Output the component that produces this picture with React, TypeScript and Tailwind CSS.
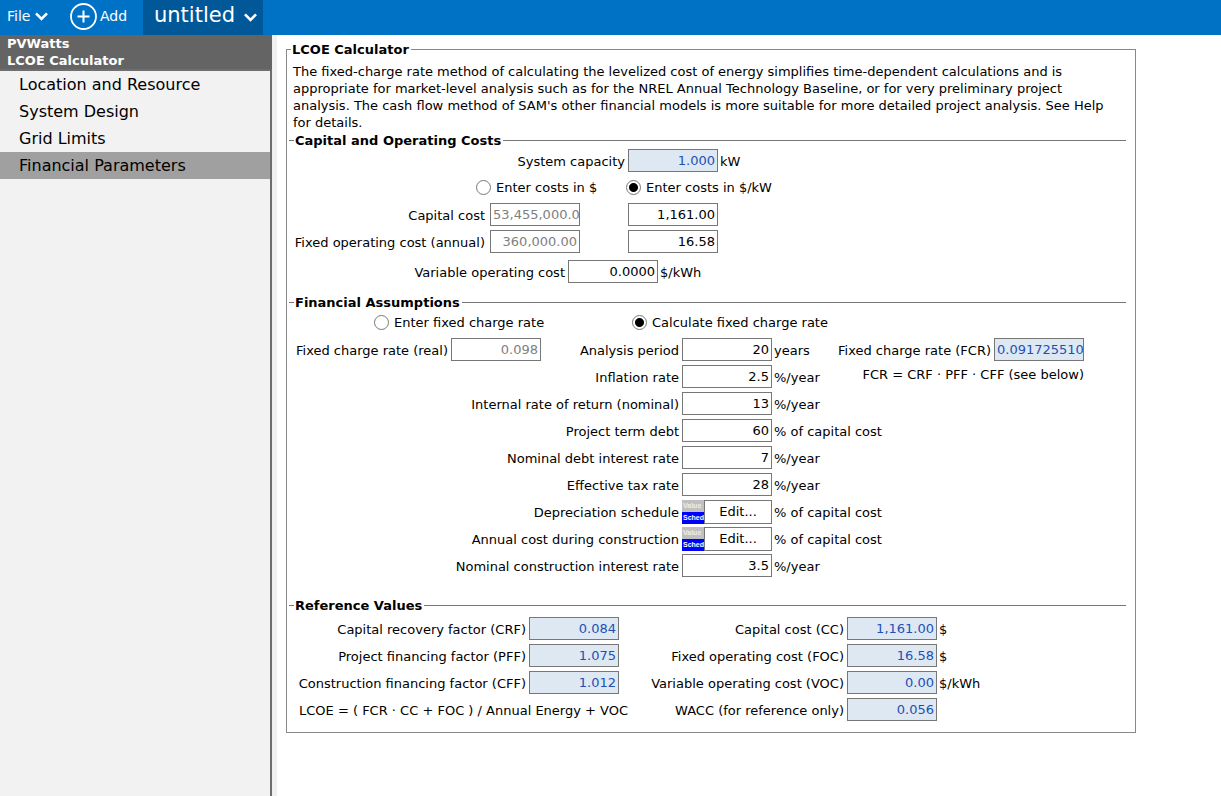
import { useState, type ReactNode } from "react";

const navItems = ["Location and Resource", "System Design", "Grid Limits", "Financial Parameters"];

function Chevron() {
  return (
    <svg className="h-[9px] w-[13px]" viewBox="0 0 13 9" fill="none" stroke="currentColor" strokeWidth="2.6" aria-hidden="true">
      <path d="M1 1.4 L6.5 7 L12 1.4" />
    </svg>
  );
}

function PlusCircle() {
  return (
    <svg className="h-[27px] w-[27px]" viewBox="0 0 27 27" fill="none" stroke="currentColor" aria-hidden="true">
      <circle cx="13.5" cy="13.5" r="12.5" strokeWidth="1.8" />
      <path d="M13.5 7.5 V19.5 M7.5 13.5 H19.5" strokeWidth="2" />
    </svg>
  );
}

type FieldKind = "edit" | "disabled" | "calc";

const fieldStyles: Record<FieldKind, string> = {
  edit: "bg-white text-black",
  disabled: "bg-white text-[#808080]",
  calc: "bg-[#dee8f3] text-[#1e50b4]",
};

function Field({ id, value, kind = "edit", long = false }: { id: string; value: string; kind?: FieldKind; long?: boolean }) {
  return (
    <input
      id={id}
      type="text"
      defaultValue={value}
      disabled={kind === "disabled"}
      readOnly={kind === "calc"}
      className={`h-[23px] w-[90px] shrink-0 border border-[#777777] pb-px pl-0.5 outline-none ${long ? "text-left" : "pr-0.5 text-right"} ${fieldStyles[kind]}`}
    />
  );
}

function Label({ id, className = "", children }: { id: string; className?: string; children: ReactNode }) {
  return (
    <label htmlFor={id} className={`shrink-0 pt-px pr-px text-right whitespace-nowrap ${className}`}>
      {children}
    </label>
  );
}

function Unit({ className = "", children }: { className?: string; children: ReactNode }) {
  return <span className={`pt-px whitespace-nowrap ${className}`}>{children}</span>;
}

interface RadioProps {
  name: string;
  checked: boolean;
  onSelect: () => void;
  className?: string;
  children: ReactNode;
}

function Radio({ name, checked, onSelect, className = "", children }: RadioProps) {
  return (
    <label className={`flex items-center gap-[5px] whitespace-nowrap ${className}`}>
      <input
        type="radio"
        name={name}
        checked={checked}
        onChange={onSelect}
        className="h-[15px] w-[15px] shrink-0 appearance-none rounded-full border border-[#777777] bg-white checked:bg-[radial-gradient(circle,#000_4px,transparent_5px)]"
      />
      {children}
    </label>
  );
}

function Schedule({ id }: { id: string }) {
  return (
    <div className="flex h-6 w-[90px]">
      <div className="flex w-[22px] flex-col font-['Liberation_Sans',sans-serif] text-[7px] leading-3 font-bold text-white">
        <button type="button" className="h-3 bg-[#c0c0c0] pl-px text-left text-[#eeeeee]">Value</button>
        <button type="button" className="h-3 bg-[#0000ff] pl-px text-left">Sched</button>
      </div>
      <button id={id} type="button" className="flex-1 border border-[#777777] bg-white pb-px">
        Edit...
      </button>
    </div>
  );
}

function Section({ title, className = "", children }: { title: string; className?: string; children: ReactNode }) {
  return (
    <fieldset className={`min-w-0 border-t border-[#777777] ${className}`}>
      <legend className="ml-[5px] pr-0.5 pl-px font-bold">{title}</legend>
      {children}
    </fieldset>
  );
}

const assumptions = [
  { id: "irr", label: "Internal rate of return (nominal)", value: "13", unit: "%/year" },
  { id: "debt", label: "Project term debt", value: "60", unit: "% of capital cost" },
  { id: "debtrate", label: "Nominal debt interest rate", value: "7", unit: "%/year" },
  { id: "tax", label: "Effective tax rate", value: "28", unit: "%/year" },
  { id: "depr", label: "Depreciation schedule", unit: "% of capital cost" },
  { id: "constr", label: "Annual cost during construction", unit: "% of capital cost" },
  { id: "constrrate", label: "Nominal construction interest rate", value: "3.5", unit: "%/year" },
];

const factors = [
  { id: "crf", label: "Capital recovery factor (CRF)", value: "0.084" },
  { id: "pff", label: "Project financing factor (PFF)", value: "1.075" },
  { id: "cff", label: "Construction financing factor (CFF)", value: "1.012" },
];

const costs = [
  { id: "cc", label: "Capital cost (CC)", value: "1,161.00", unit: "$" },
  { id: "foc", label: "Fixed operating cost (FOC)", value: "16.58", unit: "$" },
  { id: "voc", label: "Variable operating cost (VOC)", value: "0.00", unit: "$/kWh" },
  { id: "wacc", label: "WACC (for reference only)", value: "0.056", unit: "" },
];

const row = "flex h-[23px] items-center";

export default function App() {
  const [page, setPage] = useState("Financial Parameters");
  const [costMode, setCostMode] = useState("perkw");
  const [rateMode, setRateMode] = useState("calc");

  return (
    <div className="flex min-h-screen flex-col bg-white font-['DejaVu_Sans',sans-serif] text-[13px] leading-[17px] text-black">
      <header className="flex h-[35px] items-stretch bg-[#0072c6] text-white">
        <button type="button" className="flex w-[70px] items-center gap-[5px] pb-0.5 pl-[7px] text-[14px]">
          File <Chevron />
        </button>
        <button type="button" className="flex w-[73px] items-center gap-[3px] pb-0.5 text-[14px]">
          <PlusCircle /> Add
        </button>
        <button type="button" className="flex w-[120px] items-center justify-between bg-[#005899] pr-1.5 pb-1 pl-[11px] text-[21px]">
          untitled
          <span className="pt-1">
            <Chevron />
          </span>
        </button>
      </header>

      <div className="flex flex-1">
        <aside className="w-[272px] shrink-0 border-r-2 border-[#6e6e6e] bg-[#f2f2f2]">
          <div className="-mr-0.5 h-9 border-b-2 border-[#6e6e6e] bg-[#646464] pl-[7px] font-bold text-white">
            <div>PVWatts</div>
            <div>LCOE Calculator</div>
          </div>
          <nav className="flex flex-col">
            {navItems.map((item) => (
              <button
                key={item}
                type="button"
                onClick={() => setPage(item)}
                className={`h-[27px] pl-[19px] text-left text-[16px] ${item === page ? "bg-[#a0a0a0]" : ""}`}
              >
                {item}
              </button>
            ))}
          </nav>
        </aside>

        <main className="min-w-0 flex-1 border-l-[5px] border-[#f0f0f0] pt-1.5 pr-2 pl-[9px]">
          <fieldset className="w-full max-w-[850px] min-w-0 border border-[#888888] pr-[9px] pb-[11px] pl-0.5">
            <legend className="ml-0.5 pr-0.5 pl-px font-bold">LCOE Calculator</legend>

            <p className="mt-[5px] mr-3 mb-px pl-1">
              The fixed-charge rate method of calculating the levelized cost of energy simplifies time-dependent
              calculations and is appropriate for market-level analysis such as for the NREL Annual Technology Baseline,
              or for very preliminary project analysis. The cash flow method of SAM's other financial models is more
              suitable for more detailed project analysis. See Help for details.
            </p>

            <Section title="Capital and Operating Costs">
              <div className="flex flex-col gap-1">
                <div className={`${row} gap-0.5`}>
                  <Label id="capacity" className="w-[337px]">System capacity</Label>
                  <Field id="capacity" value="1.000" kind="calc" />
                  <Unit>kW</Unit>
                </div>
                <div className={`${row} pl-[187px]`}>
                  <Radio name="costs" checked={costMode === "total"} onSelect={() => setCostMode("total")} className="w-[150px]">
                    Enter costs in $
                  </Radio>
                  <Radio name="costs" checked={costMode === "perkw"} onSelect={() => setCostMode("perkw")}>
                    Enter costs in $/kW
                  </Radio>
                </div>
                <div className={`${row} gap-1`}>
                  <Label id="capital" className="w-[197px]">Capital cost</Label>
                  <Field id="capital" value="53,455,000.00" kind="disabled" long />
                  <div className="ml-11">
                    <Field id="capital-kw" value="1,161.00" />
                  </div>
                </div>
                <div className={`${row} gap-1`}>
                  <Label id="fixed" className="w-[197px]">Fixed operating cost (annual)</Label>
                  <Field id="fixed" value="360,000.00" kind="disabled" />
                  <div className="ml-11">
                    <Field id="fixed-kw" value="16.58" />
                  </div>
                </div>
              </div>
              <div className={`${row} mt-[7px] gap-0.5`}>
                <Label id="variable" className="w-[277px]">Variable operating cost</Label>
                <Field id="variable" value="0.0000" />
                <Unit>$/kWh</Unit>
              </div>
            </Section>

            <Section title="Financial Assumptions" className="mt-[11px]">
              <div className={`${row} mb-1 pl-[85px]`}>
                <Radio name="rate" checked={rateMode === "enter"} onSelect={() => setRateMode("enter")} className="w-[258px]">
                  Enter fixed charge rate
                </Radio>
                <Radio name="rate" checked={rateMode === "calc"} onSelect={() => setRateMode("calc")}>
                  Calculate fixed charge rate
                </Radio>
              </div>
              <div className="grid auto-rows-[23px] grid-cols-[160px_90px_137px_90px_60px_156px_90px] items-center gap-x-0.5 gap-y-1">
                <Label id="fcr-real">Fixed charge rate (real)</Label>
                <Field id="fcr-real" value="0.098" kind="disabled" />
                <Label id="period">Analysis period</Label>
                <Field id="period" value="20" />
                <Unit>years</Unit>
                <Label id="fcr">Fixed charge rate (FCR)</Label>
                <Field id="fcr" value="0.0917255100" kind="calc" long />

                <Label id="inflation" className="col-span-3">Inflation rate</Label>
                <Field id="inflation" value="2.5" />
                <Unit>%/year</Unit>
                <span className="col-span-2 self-start pt-px text-right whitespace-nowrap">
                  FCR = CRF · PFF · CFF (see below)
                </span>

                {assumptions.map((a) => (
                  <div key={a.id} className="contents">
                    <Label id={a.id} className="col-span-3">{a.label}</Label>
                    {a.value ? <Field id={a.id} value={a.value} /> : <Schedule id={a.id} />}
                    <Unit className="col-span-3">{a.unit}</Unit>
                  </div>
                ))}
              </div>
            </Section>

            <Section title="Reference Values" className="mt-5">
              <div className="flex pt-[3px]">
                <div className="flex w-[338px] flex-col gap-1">
                  {factors.map((f) => (
                    <div key={f.id} className={`${row} gap-0.5`}>
                      <Label id={f.id} className="w-[238px]">{f.label}</Label>
                      <Field id={f.id} value={f.value} kind="calc" />
                    </div>
                  ))}
                  <div className={`${row} pl-2.5`}>
                    <Unit>LCOE = ( FCR · CC + FOC ) / Annual Energy + VOC</Unit>
                  </div>
                </div>
                <div className="flex flex-col gap-1">
                  {costs.map((c) => (
                    <div key={c.id} className={`${row} gap-0.5`}>
                      <Label id={c.id} className="w-[218px]">{c.label}</Label>
                      <Field id={c.id} value={c.value} kind="calc" />
                      <Unit>{c.unit}</Unit>
                    </div>
                  ))}
                </div>
              </div>
            </Section>
          </fieldset>
        </main>
      </div>
    </div>
  );
}
